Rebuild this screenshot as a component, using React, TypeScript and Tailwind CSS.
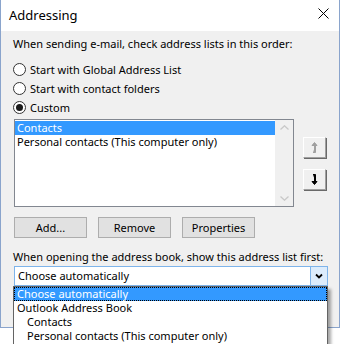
import React from "react";

const font = { fontFamily: '"Noto Sans", "Open Sans", sans-serif' };

function Radio({ label, checked }: { label: string; checked?: boolean }) {
  return (
    <div className="flex items-center h-[19px]">
      <span className="w-[13px] h-[13px] rounded-full border border-[#333] bg-white flex items-center justify-center">
        {checked && <span className="w-[7px] h-[7px] rounded-full bg-[#1a1a1a]" />}
      </span>
      <span className="ml-[4px]">{label}</span>
    </div>
  );
}

function Btn({ children }: { children: React.ReactNode }) {
  return (
    <div className="w-[73px] h-[21px] bg-[#e1e1e1] border border-[#adadad] flex items-center justify-center">
      {children}
    </div>
  );
}

function MoveBtn({ down }: { down?: boolean }) {
  const c = down ? "#000" : "#a0a0a0";
  return (
    <div className="w-[23px] h-[21px] bg-[#f0f0f0] border border-t-white border-l-white border-r-[#a0a0a0] border-b-[#a0a0a0] shadow-[1px_1px_0_#696969] flex items-center justify-center">
      <svg width="7" height="11" viewBox="0 0 7 11">
        {down ? (
          <path d="M2 0.5H4.5V8M3.5 0V8M1 7.5H6L3.5 10.5Z" stroke={c} strokeWidth="1" fill={c} />
        ) : (
          <path d="M2 10.5H4.5V3M3.5 11V3M1 3.5H6L3.5 0.5Z" stroke={c} strokeWidth="1" fill={c} />
        )}
      </svg>
    </div>
  );
}

export default function App() {
  return (
    <div className="relative w-[340px] h-[344px] bg-white overflow-hidden text-[11px] leading-[16px] text-black" style={font}>
      <div className="w-[340px] h-[328px] border-x border-b border-[#8aa4cc] flex flex-col">
        <div className="h-[31px] bg-white flex items-center justify-between pl-[8px] pr-[10px]">
          <span className="text-[13px] -mt-[2px]">Addressing</span>
          <svg width="11" height="11" viewBox="0 0 11 11" className="-mt-[4px]">
            <path d="M0.5 0.5L10.5 10.5M10.5 0.5L0.5 10.5" stroke="#000" strokeWidth="1" />
          </svg>
        </div>
        <div className="flex-1 bg-[#f0f0f0] pl-[12px] flex flex-col">
          <div className="mt-[5px] h-[16px]">When sending e-mail, check address lists in this order:</div>
          <div className="mt-[8px] flex flex-col">
            <Radio label="Start with Global Address List" />
            <Radio label="Start with contact folders" />
            <Radio label="Custom" checked />
          </div>
          <div className="mt-[2px] ml-[1px] flex">
            <div className="w-[280px] h-[88px] bg-white border border-[#828790] flex">
              <div className="flex-1 pt-[1px]">
                <div className="h-[14px] leading-[14px] bg-[#3399ff] text-white pl-[2px]">Contacts</div>
                <div className="h-[14px] leading-[14px] pl-[2px]">Personal contacts (This computer only)</div>
              </div>
              <div className="w-[18px] bg-[#f0f0f0] flex flex-col justify-between items-center py-[5px]">
                <svg width="9" height="5" viewBox="0 0 9 5">
                  <path d="M0.5 4.5L4.5 0.8L8.5 4.5" stroke="#c8c8c8" fill="none" strokeWidth="1.3" />
                </svg>
                <svg width="9" height="5" viewBox="0 0 9 5">
                  <path d="M0.5 0.5L4.5 4.2L8.5 0.5" stroke="#c8c8c8" fill="none" strokeWidth="1.3" />
                </svg>
              </div>
            </div>
            <div className="ml-[9px] pt-[18px] flex flex-col gap-[11px]">
              <MoveBtn />
              <MoveBtn down />
            </div>
          </div>
          <div className="mt-[10px] ml-[1px] flex gap-[11px]">
            <Btn>Add...</Btn>
            <Btn>Remove</Btn>
            <Btn>Properties</Btn>
          </div>
          <div className="mt-[11px] h-[16px]">When opening the address book, show this address list first:</div>
          <div className="mt-[1px] ml-[1px] w-[314px] h-[20px] bg-white border border-[#7eb4ea] flex">
            <div className="flex-1 pl-[3px] leading-[18px]">Choose automatically</div>
            <div className="w-[17px] bg-[#dcecfc] border-l border-[#7eb4ea] flex items-center justify-center">
              <svg width="8" height="6" viewBox="0 0 8 6">
                <path d="M1 1.5L4 4.5L7 1.5" stroke="#000" fill="none" strokeWidth="1.8" />
              </svg>
            </div>
          </div>
        </div>
      </div>
      <div className="absolute left-[13px] top-[286px] w-[315px] h-[70px] bg-white border border-[#646464] shadow-[3px_3px_3px_rgba(0,0,0,0.35)]">
        <div className="h-[14px] leading-[12px] bg-[#3399ff] text-white border border-dotted border-black pl-[2px]">Choose automatically</div>
        <div className="h-[14px] leading-[14px] pl-[3px]">Outlook Address Book</div>
        <div className="h-[14px] leading-[14px] pl-[13px]">Contacts</div>
        <div className="h-[14px] leading-[14px] pl-[13px]">Personal contacts (This computer only)</div>
      </div>
    </div>
  );
}
